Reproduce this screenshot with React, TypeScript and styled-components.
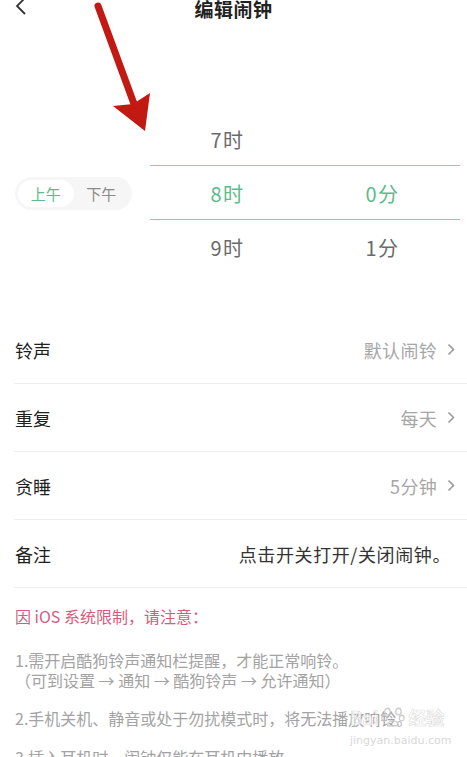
import React from "react";
import styled, { createGlobalStyle } from "styled-components";

const GlobalStyle = createGlobalStyle`
  html, body {
    margin: 0;
    padding: 0;
    background: #ffffff;
  }
  body {
    font-family: "Noto Sans CJK SC", "Noto Sans", sans-serif;
    width: 467px;
    height: 757px;
    overflow: hidden;
  }
`;

const Page = styled.div`
  position: relative;
  width: 467px;
  height: 757px;
  overflow: hidden;
  background: #fff;
`;

const Header = styled.header`
  display: flex;
  align-items: center;
  justify-content: center;
  position: relative;
  height: 40px;
  margin-top: -12px;
`;

const BackButton = styled.div`
  position: absolute;
  left: 14px;
  top: 6px;
  width: 16px;
  height: 24px;
  display: flex;
  align-items: center;
`;

const Title = styled.h1`
  margin: 0;
  font-size: 19px;
  font-weight: 700;
  color: #222;
  letter-spacing: 0.5px;
`;

const PickerSection = styled.section`
  display: flex;
  align-items: center;
  padding-left: 15px;
  margin-top: 84px;
`;

const Toggle = styled.div`
  display: flex;
  align-items: center;
  width: 117px;
  height: 33px;
  padding: 3px;
  box-sizing: border-box;
  border-radius: 17px;
  background: #f6f6f6;
  margin-right: 18px;
`;

const ToggleOption = styled.div<{ $active?: boolean }>`
  flex: 1;
  height: 100%;
  display: flex;
  align-items: center;
  justify-content: center;
  border-radius: 14px;
  font-size: 15px;
  color: ${(p) => (p.$active ? "#5bbb8a" : "#8a8a8a")};
  background: ${(p) => (p.$active ? "#ffffff" : "transparent")};
`;

const Wheel = styled.div`
  width: 310px;
  display: grid;
  grid-template-columns: 1fr 1fr;
  grid-template-rows: 54px 54px 54px;
  position: relative;
`;

const SelectedBand = styled.div`
  position: absolute;
  left: 0;
  right: 0;
  top: 53px;
  height: 55px;
  border-top: 1.5px solid #8ccfac;
  border-bottom: 1.5px solid #8ccfac;
  box-sizing: border-box;
  pointer-events: none;
`;

const WheelCell = styled.div<{ $selected?: boolean }>`
  display: flex;
  align-items: center;
  justify-content: center;
  font-size: 20px;
  letter-spacing: 1.5px;
  color: ${(p) => (p.$selected ? "#5bbb8a" : "#6a6a6a")};
`;

const SettingsList = styled.div`
  margin-top: 42px;
  margin-left: 14px;
`;

const Row = styled.div`
  display: flex;
  align-items: center;
  justify-content: space-between;
  height: 68px;
  padding-right: 12px;
  border-bottom: 1px solid #eeeeee;
  box-sizing: border-box;
`;

const RowLabel = styled.span`
  font-size: 18px;
  color: #1f1f1f;
  padding-left: 1px;
`;

const RowValue = styled.span<{ $dark?: boolean }>`
  display: flex;
  align-items: center;
  gap: 10px;
  font-size: 18px;
  letter-spacing: ${(p) => (p.$dark ? "0.6px" : "0.3px")};
  color: ${(p) => (p.$dark ? "#333" : "#a6a6a6")};
  padding-right: ${(p) => (p.$dark ? "4px" : "0")};
`;

const Notice = styled.div`
  padding: 18px 15px 0;
`;

const NoticeTitle = styled.div`
  font-size: 16px;
  line-height: 20px;
  color: #d65b7c;
  margin-bottom: 25px;
`;

const NoticeItem = styled.p`
  margin: 0 0 19px;
  font-size: 16px;
  line-height: 19.5px;
  color: #a3a3a3;
`;

const Watermark = styled.div`
  position: absolute;
  left: 350px;
  top: 704px;
  display: flex;
  flex-direction: column;
  align-items: flex-start;
  pointer-events: none;
`;

const WatermarkTop = styled.div`
  display: flex;
  align-items: center;
  gap: 3px;
  font-size: 18px;
  font-weight: 700;
  -webkit-text-stroke: 0.6px rgba(215, 215, 215, 0.9);
  color: rgba(255, 255, 255, 0.7);
`;

const WatermarkUrl = styled.div`
  font-family: "DejaVu Sans", sans-serif;
  font-size: 11px;
  margin-top: 4px;
  color: rgba(210, 210, 210, 0.9);
`;

const ArrowLayer = styled.svg`
  position: absolute;
  left: 0;
  top: 0;
  pointer-events: none;
`;

const Chevron = () => (
  <svg width="8" height="13" viewBox="0 0 8 13">
    <path d="M1.5 1.5 L6.5 6.5 L1.5 11.5" fill="none" stroke="#9a9a9a" strokeWidth="1.6" />
  </svg>
);

const rows = [
  { label: "铃声", value: "默认闹铃", arrow: true },
  { label: "重复", value: "每天", arrow: true },
  { label: "贪睡", value: "5分钟", arrow: true },
  { label: "备注", value: "点击开关打开/关闭闹钟。", arrow: false },
];

export default function App() {
  return (
    <Page>
      <GlobalStyle />
      <Header>
        <BackButton>
          <svg width="14" height="24" viewBox="0 0 14 24">
            <path d="M11 4 L3 12 L11 20" fill="none" stroke="#333" strokeWidth="1.8" />
          </svg>
        </BackButton>
        <Title>编辑闹钟</Title>
      </Header>

      <PickerSection>
        <Toggle>
          <ToggleOption $active>上午</ToggleOption>
          <ToggleOption>下午</ToggleOption>
        </Toggle>
        <Wheel>
          <SelectedBand />
          <WheelCell>7时</WheelCell>
          <WheelCell />
          <WheelCell $selected>8时</WheelCell>
          <WheelCell $selected>0分</WheelCell>
          <WheelCell>9时</WheelCell>
          <WheelCell>1分</WheelCell>
        </Wheel>
      </PickerSection>

      <SettingsList>
        {rows.map((r) => (
          <Row key={r.label}>
            <RowLabel>{r.label}</RowLabel>
            <RowValue $dark={!r.arrow}>
              {r.value}
              {r.arrow && <Chevron />}
            </RowValue>
          </Row>
        ))}
      </SettingsList>

      <Notice>
        <NoticeTitle>因 iOS 系统限制，请注意：</NoticeTitle>
        <NoticeItem>
          1.需开启酷狗铃声通知栏提醒，才能正常响铃。
          <br />
          （可到设置 → 通知 → 酷狗铃声 → 允许通知）
        </NoticeItem>
        <NoticeItem>2.手机关机、静音或处于勿扰模式时，将无法播放响铃。</NoticeItem>
        <NoticeItem>3.插入耳机时，闹钟仅能在耳机中播放。</NoticeItem>
      </Notice>

      <Watermark>
        <WatermarkTop>
          <span>Bai</span>
          <svg width="24" height="24" viewBox="0 0 22 22">
            <g fill="none" stroke="rgba(200,200,200,0.9)" strokeWidth="1.2">
              <ellipse cx="6" cy="6" rx="2.5" ry="3" />
              <ellipse cx="16" cy="6" rx="2.5" ry="3" />
              <ellipse cx="3" cy="12" rx="2.2" ry="2.6" />
              <ellipse cx="19" cy="12" rx="2.2" ry="2.6" />
              <path d="M6 19 C6 13 16 13 16 19 Z" />
            </g>
          </svg>
          <span>经验</span>
        </WatermarkTop>
        <WatermarkUrl>jingyan.baidu.com</WatermarkUrl>
      </Watermark>

      <ArrowLayer width="467" height="757" viewBox="0 0 467 757">
        <path d="M98 6 L137 112" stroke="#c21912" strokeWidth="7" strokeLinecap="round" fill="none" />
        <path d="M145 131 L113 106 L133 104 L150 93 Z" fill="#c21912" />
      </ArrowLayer>
    </Page>
  );
}
